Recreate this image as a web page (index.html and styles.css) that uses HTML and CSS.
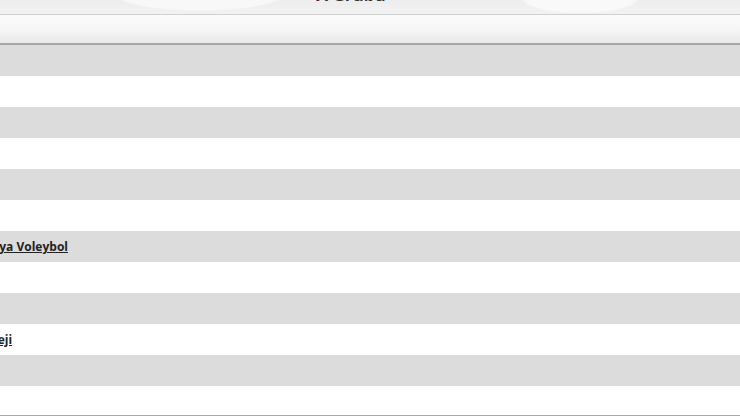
FILE: index.html
```html
<!DOCTYPE html>
<html>
<head>
<meta charset="utf-8">
<link rel="stylesheet" href="styles.css">
</head>
<body>
<div class="page">
  <div class="title"><span class="title-text">A Grubu</span></div>
  <div class="thead"></div>
  <div class="rows">
    <div class="row odd"></div>
    <div class="row"></div>
    <div class="row odd"></div>
    <div class="row"></div>
    <div class="row odd"></div>
    <div class="row"></div>
    <div class="row odd"><a class="team t1">Konya Voleybol</a></div>
    <div class="row"></div>
    <div class="row odd"></div>
    <div class="row"><a class="team t2">TED Koleji</a></div>
    <div class="row odd"></div>
    <div class="row last"></div>
  </div>
</div>
</body>
</html>
```
FILE: styles.css
```css
html, body {
  margin: 0;
  padding: 0;
  background: #ffffff;
  overflow: hidden;
}
.page {
  width: 740px;
  height: 417px;
  font-family: "Open Sans", "Liberation Sans", sans-serif;
  overflow: hidden;
}
.title {
  height: 14px;
  overflow: hidden;
  background:
    radial-gradient(ellipse 140px 30px at 200px -8px, #f8f8f8 60%, transparent 64%),
    radial-gradient(ellipse 100px 26px at 580px -2px, #f9f9f9 55%, transparent 60%),
    linear-gradient(#ededed, #f2f2f2);
  display: flex;
  justify-content: center;
}
.title-text {
  display: block;
  margin-top: -14px;
  margin-left: -38px;
  font-size: 17px;
  line-height: 18px;
  font-weight: 700;
  color: #333;
}
.thead {
  height: 28px;
  border-top: 1px solid #cfcfcf;
  border-bottom: 2px solid #a6a6a6;
  background: linear-gradient(#fbfbfb, #f6f6f6 50%, #e9e9e9);
}
.rows {
  display: flex;
  flex-direction: column;
}
.row {
  height: 31px;
  background: #ffffff;
  display: flex;
  align-items: center;
}
.row.odd {
  background: #dcdcdc;
}
.row.last {
  height: 29px;
  border-bottom: 1px solid #a8a8a8;
}
.team {
  font-size: 12px;
  font-weight: 700;
  color: #222;
  text-decoration: underline;
  white-space: nowrap;
}
.t1 {
  margin-left: -24px;
}
.t2 {
  margin-left: -47px;
}
```
